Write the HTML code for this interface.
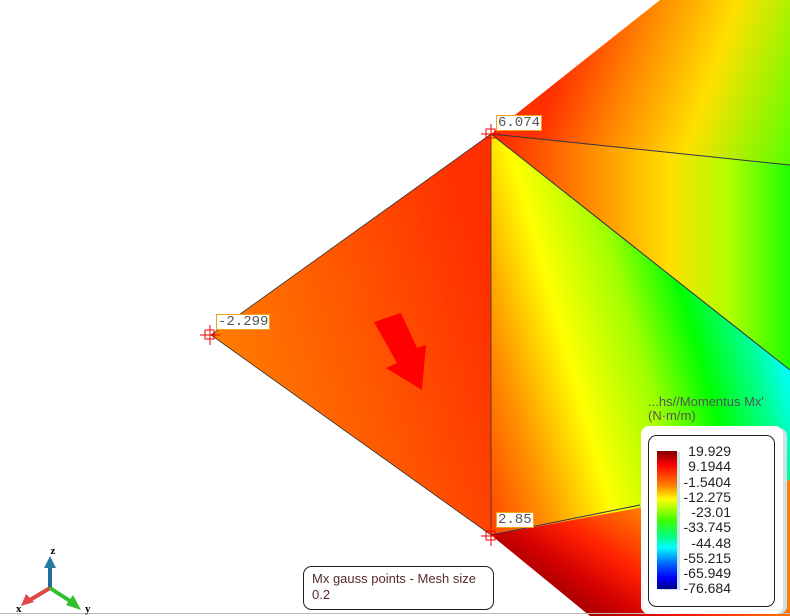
<!DOCTYPE html>
<html><head><meta charset="utf-8"><style>
html,body{margin:0;padding:0;background:#fff;width:790px;height:616px;overflow:hidden;font-family:"Liberation Sans",sans-serif}
.lbl{position:absolute;font-family:"Liberation Mono",monospace;font-size:14px;color:#555;background:#fff;border:1px solid #f5a020;padding:0 1px;line-height:14px}
</style></head><body>
<svg width="790" height="616" style="position:absolute;left:0;top:0">
<defs>
<linearGradient id="gL" gradientUnits="userSpaceOnUse" x1="210" y1="380" x2="490" y2="296">
<stop offset="0" stop-color="#ff8000"/><stop offset="0.5" stop-color="#ff5a00"/><stop offset="1" stop-color="#ff3000"/></linearGradient>
<linearGradient id="gM" gradientUnits="userSpaceOnUse" x1="491" y1="535" x2="811" y2="445">
<stop offset="0" stop-color="#ff4400"/><stop offset="0.17" stop-color="#ff9000"/><stop offset="0.37" stop-color="#ffff00"/><stop offset="0.58" stop-color="#a0ff00"/><stop offset="0.75" stop-color="#00ff00"/><stop offset="0.9" stop-color="#00ff90"/><stop offset="1" stop-color="#00ffff"/></linearGradient>
<linearGradient id="gU" gradientUnits="userSpaceOnUse" x1="490" y1="200" x2="790" y2="200">
<stop offset="0" stop-color="#ff2000"/><stop offset="0.3" stop-color="#ff8000"/><stop offset="0.6" stop-color="#ffe000"/><stop offset="0.8" stop-color="#b0ff00"/><stop offset="1" stop-color="#20ff00"/></linearGradient>
<linearGradient id="gT" gradientUnits="userSpaceOnUse" x1="560" y1="70" x2="790" y2="150">
<stop offset="0" stop-color="#ff3000"/><stop offset="0.3" stop-color="#ff8c00"/><stop offset="0.6" stop-color="#ffe000"/><stop offset="1" stop-color="#60ff00"/></linearGradient>
<linearGradient id="gB" gradientUnits="userSpaceOnUse" x1="520" y1="600" x2="600" y2="480">
<stop offset="0" stop-color="#800000"/><stop offset="0.35" stop-color="#d00000"/><stop offset="0.6" stop-color="#ff2000"/><stop offset="1" stop-color="#ff8000"/></linearGradient>
<linearGradient id="gC" x1="0" y1="0" x2="0" y2="1">
<stop offset="0" stop-color="#800000"/><stop offset="0.1" stop-color="#ff0000"/><stop offset="0.25" stop-color="#ff8000"/><stop offset="0.35" stop-color="#ffff00"/><stop offset="0.5" stop-color="#40ff00"/><stop offset="0.62" stop-color="#00ff80"/><stop offset="0.7" stop-color="#00ffff"/><stop offset="0.82" stop-color="#0060ff"/><stop offset="0.92" stop-color="#0000ff"/><stop offset="1" stop-color="#000080"/></linearGradient>
</defs>
<polygon points="491,134 660,0 790,0 790,165" fill="url(#gT)"/>
<polygon points="491,134 790,165 790,370" fill="url(#gU)"/>
<polygon points="491,134 790,370 790,480 491,535" fill="url(#gM)"/>
<polygon points="491,535 790,480 790,616 590,616" fill="url(#gB)"/>
<polygon points="211,335 491,134 491,535" fill="url(#gL)" stroke="#333" stroke-width="0.8"/>
<line x1="491" y1="134" x2="790" y2="165" stroke="#334" stroke-width="1"/>
<line x1="491" y1="134" x2="790" y2="370" stroke="#334" stroke-width="1"/>
<line x1="491" y1="535" x2="640" y2="505" stroke="#334" stroke-width="1"/>
<polygon points="374,322 401,313 417,348 426,345 422,390 386,368 397,363" fill="#ff0000"/>
<g stroke="#e00" stroke-width="1" fill="none">
<rect x="486" y="129" width="9" height="9"/><line x1="481" y1="134" x2="501" y2="134"/><line x1="491" y1="124" x2="491" y2="144"/>
<rect x="205" y="330" width="9" height="9"/><line x1="200" y1="335" x2="220" y2="335"/><line x1="210" y1="325" x2="210" y2="345"/>
<rect x="486" y="531" width="9" height="9"/><line x1="481" y1="536" x2="501" y2="536"/><line x1="491" y1="526" x2="491" y2="546"/>
</g>
<line x1="0" y1="613.5" x2="790" y2="613.5" stroke="#bbb"/>
<!-- axes -->
<line x1="50" y1="588" x2="50" y2="566" stroke="#1f6f9a" stroke-width="4"/>
<polygon points="44,568 50,556 56,568" fill="#2a7aa6"/>
<line x1="50" y1="588" x2="30" y2="600" stroke="#e04848" stroke-width="4"/>
<polygon points="21,606 26,594 34,602" fill="#e04848"/>
<line x1="50" y1="588" x2="70" y2="601" stroke="#30c030" stroke-width="4"/>
<polygon points="81,610 66,605 73,595" fill="#30c030"/>
<text x="53" y="554" font-family="Liberation Serif" font-weight="bold" font-size="11" text-anchor="middle">z</text>
<text x="16" y="612" font-family="Liberation Serif" font-weight="bold" font-size="11">x</text>
<text x="85" y="612" font-family="Liberation Serif" font-weight="bold" font-size="11">y</text>
<!-- legend -->
<rect x="643" y="428" width="144" height="186" rx="8" fill="#c8e4ea"/>
<rect x="641" y="426" width="142" height="188" rx="8" fill="#fff"/>
<rect x="648.5" y="435.5" width="126" height="171" rx="8" fill="none" stroke="#222"/>
<rect x="659" y="452" width="21" height="138" fill="#c8e4ea"/>
<rect x="657" y="451" width="20" height="138" fill="url(#gC)"/>
<g font-family="Liberation Sans" font-size="14" fill="#222" text-anchor="end">
<text x="731" y="456">19.929</text><text x="731" y="471">9.1944</text><text x="731" y="487">-1.5404</text><text x="731" y="502">-12.275</text><text x="731" y="517">-23.01</text><text x="731" y="532">-33.745</text><text x="731" y="548">-44.48</text><text x="731" y="563">-55.215</text><text x="731" y="578">-65.949</text><text x="731" y="593">-76.684</text>
</g>
<text x="648" y="406" font-family="Liberation Sans" font-size="13" fill="#555">...hs//Momentus Mx'</text>
<text x="648" y="420" font-family="Liberation Sans" font-size="13" fill="#555">(N·m/m)</text>
<rect x="303.5" y="566.5" width="190" height="43" rx="8" fill="#fff" stroke="#222"/>
<text x="312" y="583" font-family="Liberation Sans" font-size="13" fill="#5a2a2a">Mx gauss points - Mesh size</text>
<text x="312" y="599" font-family="Liberation Sans" font-size="13" fill="#5a2a2a">0.2</text>
</svg>
<div class="lbl" style="left:496px;top:115px">6.074</div>
<div class="lbl" style="left:216px;top:314px">-2.299</div>
<div class="lbl" style="left:496px;top:512px">2.85</div>
</body></html>
